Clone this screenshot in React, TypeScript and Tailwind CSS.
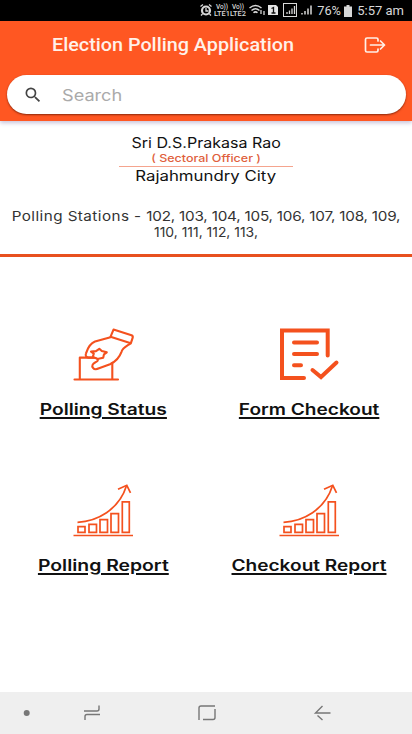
import { useState } from 'react';

interface MenuItem {
    label: string;
    icon: 'vote' | 'form' | 'chart';
    labelClass: string;
}

const menuItems: MenuItem[] = [
    { label: 'Polling Status', icon: 'vote', labelClass: 'scale-x-[1.24]' },
    { label: 'Form Checkout', icon: 'form', labelClass: 'scale-x-[1.23]' },
    { label: 'Polling Report', icon: 'chart', labelClass: 'scale-x-[1.25]' },
    { label: 'Checkout Report', icon: 'chart', labelClass: 'scale-x-[1.23]' },
];

function VoteIcon() {
    return (
        <svg width="66" height="62" viewBox="70 325.2 66 62" fill="none" stroke="#f4511e" strokeWidth="2.1" strokeLinejoin="round" strokeLinecap="round">
            <path d="M74.500 379.700H118" />
            <path d="M79.800 379V357.800H94M112.300 379V363" />
            <path d="M113.500 329.800L131.500 335.500Q133.200 336.200 132.700 337.800L130.800 343.500L110.500 337Z" />
            <path d="M110.500 337.500L95 341.800C90.500 343.500 87.500 349 86 353.500C85 356 86.500 357.800 88.500 357.800H94C98.500 358.500 99 361 95.500 362.500C92.500 364 91.500 366 93 368C94.500 370 97 369.500 99 368.500L110 364.500C116 361.500 119.500 357.500 121.500 352C122.500 348 126 346.500 130 344" />
            <path d="M93 356.500L93.800 353.800L91 351.800L96 351.300L99.300 349L101.800 351.300L106.800 352.500L104 354.500L103.200 358L98.500 359" />
        </svg>
    );
}

function FormIcon() {
    return (
        <svg width="62" height="58" viewBox="278 327.5 62 58" fill="none" stroke="#f4511e" strokeWidth="4" strokeLinejoin="miter" strokeLinecap="round">
            <path d="M304 378.500H282V331H327.700V356" />
            <path d="M294 343H317M294 354.500H317M294 365.800H301" />
            <path d="M312.500 370.500L321 377.500L336.500 363" />
        </svg>
    );
}

function ChartIcon() {
    return (
        <svg width="64" height="56" viewBox="71 484.2 64 56" fill="none" stroke="#f4511e" strokeWidth="1.7">
            <path d="M73.500 535.700H133" />
            <path d="M78 526.800H85V532.500H78ZM89 524.500H96.500V532.500H89ZM100 519.800H107.500V532.500H100ZM111 513.800H118.500V532.500H111ZM122.300 502H129.300V532.500H122.300Z" />
            <path d="M77.500 522.500C97 521.500 119 510 126.500 486" />
            <path d="M118 489.500L126.800 485.500L130.500 493" />
        </svg>
    );
}

function StatusBar() {
    return (
        <div className="flex h-[21px] items-center justify-end bg-black pr-2 font-['Roboto'] text-[#d8d8d8]">
            <svg width="116" height="21" viewBox="199 0 116 21" className="shrink-0" fill="none" stroke="#d8d8d8">
                <circle cx="206" cy="10.500" r="4" strokeWidth="2.200" />
                <path d="M206 8V11H208.500M200.500 6.500L203 4.500M209 4.500L211.500 6.500M202.500 14L201 15.500M209.500 14L211 15.500" strokeWidth="1.300" />
                <g fill="#d8d8d8" stroke="none" fontFamily="Roboto" fontWeight="500">
                    <text x="216" y="9" fontSize="6.500" textLength="12">Vo))</text>
                    <text x="232" y="9" fontSize="6.500" textLength="12">Vo))</text>
                    <text x="214" y="15.800" fontSize="7" textLength="32" lengthAdjust="spacingAndGlyphs">LTE1LTE2</text>
                </g>
                <path d="M249.500 8Q255.500 3 261.500 8M251.500 10.500Q255.500 7 259.500 10.500M253.500 12.800Q255.500 11 257.500 12.800" strokeWidth="1.500" />
                <path d="M261 10V14M264 11V15" strokeWidth="1.300" />
                <path d="M268 5H276L278 7V15H268Z" fill="#e5e5e5" stroke="none" />
                <path d="M271.500 8.500L273.500 7.500V13M271.500 13H275.500" stroke="#111" strokeWidth="1.300" />
                <rect x="283.500" y="3.500" width="13" height="13" strokeWidth="1" />
                <path d="M287 12V14M289.500 10.500V14M292 8.500V14M294.500 6V14" strokeWidth="1.300" />
                <path d="M302 13V14.500M305 11V14.500M308 8.500V14.500M311 5.500V14.500" strokeWidth="1.500" />
            </svg>
            <span className="ml-0.5 w-6 whitespace-nowrap text-[12.8px]">76%</span>
            <svg width="8" height="12" viewBox="0 0 8 12" className="ml-[3px] mr-[5px] shrink-0" fill="#d8d8d8">
                <path d="M2.500 0H5.500V1.500H8V12H0V1.500H2.500Z" />
            </svg>
            <span className="whitespace-nowrap text-[13px]">5:57 am</span>
        </div>
    );
}

function Header({ query, onSearch }: { query: string; onSearch: (value: string) => void }) {
    return (
        <header className="h-[100px] bg-[#ff5722] pl-[7px] pr-[6px] shadow-[0_2px_4px_rgba(60,40,120,0.28)]">
            <div className="flex h-[54px] items-center justify-between pl-[45px] pr-[20px] pb-[6px]">
                <h1 className="origin-left scale-x-[1.13] whitespace-nowrap font-['Roboto'] text-[17.5px] font-medium text-[#fff1e9]">
                    Election Polling Application
                </h1>
                <button aria-label="Sign out">
                    <svg width="22" height="18" viewBox="364 36 22 18" fill="none" stroke="#fff1e9" strokeWidth="1.700" strokeLinecap="round" strokeLinejoin="round">
                        <path d="M378 41V39.500Q378 38 376.500 38H367Q365.500 38 365.500 39.500V50.500Q365.500 52 367 52H376.500Q378 52 378 50.500V49" />
                        <path d="M370.500 45H384.500M380.500 41L384.500 45L380.500 49" />
                    </svg>
                </button>
            </div>
            <div className="flex h-[39px] items-center rounded-full bg-white pl-[16px] shadow-[0_1px_2px_rgba(90,20,0,0.7)]">
                <svg width="20" height="20" viewBox="0 0 24 24" fill="#444">
                    <path d="M15.500 14h-.79l-.28-.27A6.470 6.470 0 0 0 16 9.500 6.500 6.500 0 1 0 9.500 16c1.610 0 3.090-.59 4.230-1.570l.27.28v.79l5 4.990L20.490 19l-4.990-5zm-6 0C7.010 14 5 11.990 5 9.500S7.010 5 9.500 5 14 7.010 14 9.500 11.990 14 9.500 14z" />
                </svg>
                <input
                    value={query}
                    onChange={(e) => onSearch(e.target.value)}
                    placeholder="Search"
                    className="ml-[19px] mt-[2px] w-[250px] origin-left scale-x-[1.17] bg-transparent text-[15.5px] text-gray-700 outline-none placeholder:text-[#aaa]"
                />
            </div>
        </header>
    );
}

function OfficerDetails() {
    return (
        <section className="flex h-[136px] flex-col items-center whitespace-nowrap border-b-[3px] border-[#e8501f] pt-[13px] text-center text-[#111]">
            <div className="h-[17px] scale-x-[1.145] text-[14px] leading-[17px]">Sri D.S.Prakasa Rao</div>
            <div className="h-[15px] scale-x-[1.19] text-[10.5px] font-medium leading-[16px] text-[#e0603c]">( Sectoral Officer )</div>
            <div className="h-px w-[174px] bg-[#f5a48e]"></div>
            <div className="h-[17px] scale-x-[1.2] text-[14px] leading-[17px]">Rajahmundry City</div>
            <div className="mt-[24px] text-[13.5px] leading-[16px] text-[#333]">
                <div className="scale-x-[1.13]">
                    <span className="tracking-[0.38px]">Polling Stations - </span>
                    <span className="tracking-[-0.18px]">102, 103, 104, 105, 106, 107, 108, 109,</span>
                </div>
                <div className="scale-x-[1.03]">110, 111, 112, 113,</div>
            </div>
        </section>
    );
}

function NavBar() {
    return (
        <nav className="h-[42px] bg-[#efefef]">
            <svg width="412" height="42" viewBox="0 692 412 42" fill="none" stroke="#777" strokeWidth="1.400">
                <circle cx="26.700" cy="713" r="3" fill="#777" stroke="none" />
                <path d="M84 711H97Q99 711 99 709V705.500M100 714.500H87Q85 714.500 85 716.500V720" />
                <path d="M215 706H201Q199 706 199 708V720M203 719.500H213Q215 719.500 215 717.500V709" />
                <path d="M330.500 713H315.500L322.500 706M317.500 715.500L322.500 720" />
            </svg>
        </nav>
    );
}

export default function App() {
    const [query, setQuery] = useState('');

    return (
        <div className="flex h-[734px] w-[412px] flex-col overflow-hidden bg-white font-['Inter',sans-serif]">
            <StatusBar />
            <Header query={query} onSearch={setQuery} />
            <OfficerDetails />
            <main className="grid flex-1 grid-cols-2 content-start pt-[66px]">
                {menuItems.map((item) => (
                    <button key={item.label} className="flex h-[156px] flex-col items-center">
                        <div className="flex h-[65px] items-center">
                            {item.icon === 'vote' && <VoteIcon />}
                            {item.icon === 'form' && <FormIcon />}
                            {item.icon === 'chart' && <ChartIcon />}
                        </div>
                        <span className={`mt-[12px] whitespace-nowrap text-[15.5px] font-semibold leading-[20px] text-[#111] underline decoration-[1.5px] underline-offset-2 ${item.labelClass}`}>
                            {item.label}
                        </span>
                    </button>
                ))}
            </main>
            <NavBar />
        </div>
    );
}
